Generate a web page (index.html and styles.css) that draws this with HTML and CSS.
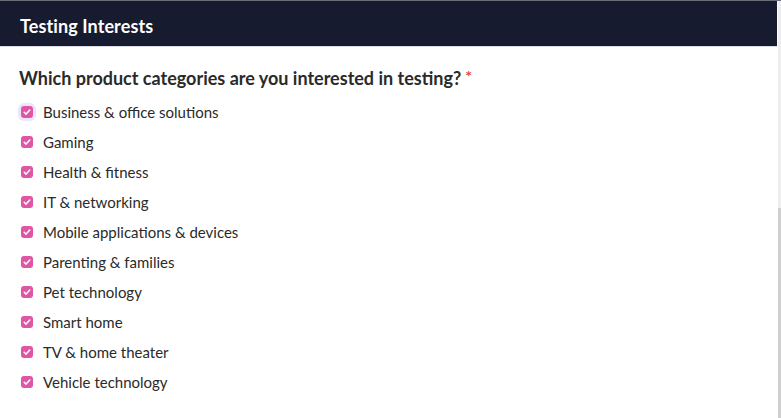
FILE: index.html
```html
<!DOCTYPE html>
<html>
<head>
<meta charset="utf-8">
<link rel="stylesheet" href="styles.css">
</head>
<body>
<div class="page">
  <div class="panel">
    <div class="panel-header">Testing Interests</div>
    <div class="panel-body">
      <div class="question">Which product categories are you interested in testing?<span class="req">*</span></div>
      <ul class="options">
        <li class="option focused"><span class="box"><svg viewBox="0 0 12 12"><path d="M3.2 6.2l1.9 1.9 3.7-4"/></svg></span>Business &amp; office solutions</li>
        <li class="option"><span class="box"><svg viewBox="0 0 12 12"><path d="M3.2 6.2l1.9 1.9 3.7-4"/></svg></span>Gaming</li>
        <li class="option"><span class="box"><svg viewBox="0 0 12 12"><path d="M3.2 6.2l1.9 1.9 3.7-4"/></svg></span>Health &amp; fitness</li>
        <li class="option"><span class="box"><svg viewBox="0 0 12 12"><path d="M3.2 6.2l1.9 1.9 3.7-4"/></svg></span>IT &amp; networking</li>
        <li class="option"><span class="box"><svg viewBox="0 0 12 12"><path d="M3.2 6.2l1.9 1.9 3.7-4"/></svg></span>Mobile applications &amp; devices</li>
        <li class="option"><span class="box"><svg viewBox="0 0 12 12"><path d="M3.2 6.2l1.9 1.9 3.7-4"/></svg></span>Parenting &amp; families</li>
        <li class="option"><span class="box"><svg viewBox="0 0 12 12"><path d="M3.2 6.2l1.9 1.9 3.7-4"/></svg></span>Pet technology</li>
        <li class="option"><span class="box"><svg viewBox="0 0 12 12"><path d="M3.2 6.2l1.9 1.9 3.7-4"/></svg></span>Smart home</li>
        <li class="option"><span class="box"><svg viewBox="0 0 12 12"><path d="M3.2 6.2l1.9 1.9 3.7-4"/></svg></span>TV &amp; home theater</li>
        <li class="option"><span class="box"><svg viewBox="0 0 12 12"><path d="M3.2 6.2l1.9 1.9 3.7-4"/></svg></span>Vehicle technology</li>
      </ul>
    </div>
  </div>
  <div class="scrollbar"><div class="thumb"></div></div>
</div>
</body>
</html>
```
FILE: styles.css
```css
html, body {
  margin: 0;
  padding: 0;
  background: #ffffff;
}
body {
  font-family: Lato, "Open Sans", sans-serif;
  color: #333333;
}
.page {
  position: relative;
  width: 781px;
  height: 418px;
  overflow: hidden;
  border-top: 1px solid #6b6d78;
  box-sizing: border-box;
}
.panel {
  width: 777px;
}
.panel-header {
  background: #171b2f;
  color: #ffffff;
  font-weight: 700;
  font-size: 18px;
  letter-spacing: 0.1px;
  line-height: 51px;
  padding-left: 20px;
  border-bottom: 1px solid #d9dbe6;
  box-sizing: border-box;
  height: 46px;
}
.panel-body {
  padding: 17px 19px 0 19px;
}
.question {
  font-size: 18px;
  font-weight: 700;
  color: #2a2a2a;
  line-height: 24px;
}
.req {
  color: #e0483f;
  font-size: 16px;
  margin-left: 4px;
  vertical-align: 3px;
}
.options {
  list-style: none;
  margin: 7px 0 0 0;
  padding: 0;
}
.option {
  display: flex;
  align-items: center;
  height: 30px;
  font-size: 15px;
  color: #2a2a2a;
}
.box {
  width: 12px;
  height: 12px;
  border-radius: 3px;
  background: #df56a5;
  margin-left: 2px;
  margin-right: 10px;
  display: flex;
  flex-shrink: 0;
}
.box svg {
  width: 12px;
  height: 12px;
  fill: none;
  stroke: #ffffff;
  stroke-width: 1.5;
  stroke-linecap: round;
  stroke-linejoin: round;
}
.focused .box {
  box-shadow: 0 0 0 3px #ece6fb;
}
.scrollbar {
  position: absolute;
  top: 0;
  right: 0;
  width: 3px;
  height: 418px;
  background: #ededed;
}
.thumb {
  margin-top: 207px;
  height: 211px;
  background: #cfcfcf;
}
```
